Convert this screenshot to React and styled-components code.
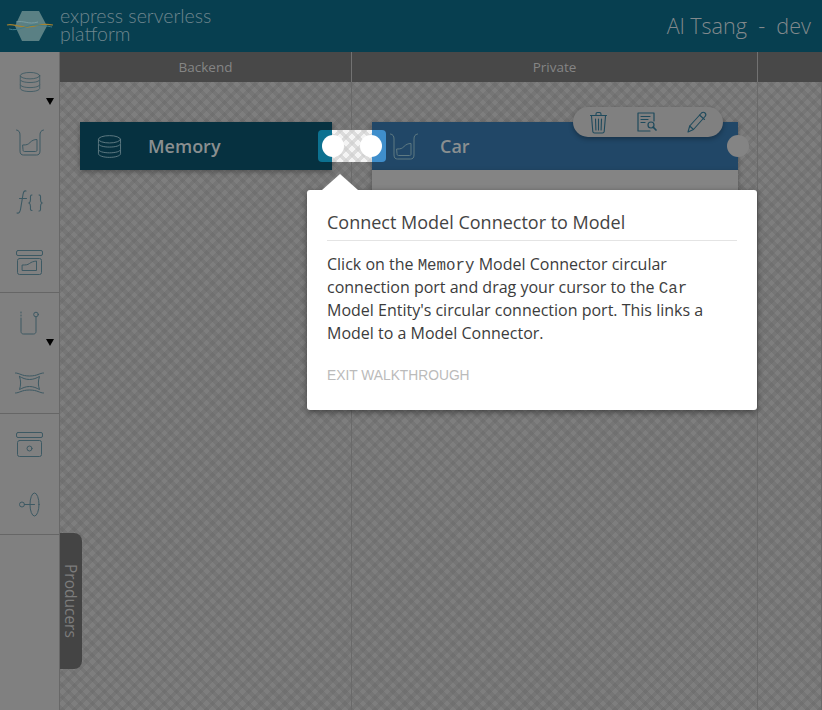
import React from 'react';
import styled, { createGlobalStyle } from 'styled-components';

const Global = createGlobalStyle`
  html, body { margin: 0; padding: 0; height: 100%; background: #808080; }
  #root { height: 100%; }
  * { box-sizing: border-box; }
`;

const pattern = (a, b) => `
  background-color: ${a};
  background-image:
    repeating-linear-gradient(45deg, ${b} 0 4px, transparent 4px 8.5px),
    repeating-linear-gradient(-45deg, ${b} 0 4px, transparent 4px 8.5px);
`;

const Page = styled.div`
  width: 822px; height: 710px; overflow: hidden; position: relative;
  display: flex; flex-direction: column;
  font-family: "Open Sans", sans-serif;
`;
const Header = styled.header`
  height: 52px; flex: none; background: #073f50;
  display: flex; align-items: center; justify-content: space-between;
  padding: 0 11px 0 6px;
`;
const Brand = styled.div`display: flex; align-items: center; gap: 6px;`;
const BrandText = styled.div`
  font-family: Lato, sans-serif; font-weight: 300; font-size: 19.5px; line-height: 18.500px;
  color: #6f868e; width: 170px; margin-top: -2px;
`;
const User = styled.div`
  font-size: 21.600px; font-weight: 300; color: #82898c; white-space: pre; margin-top: -1px;
`;
const Body = styled.div`flex: 1; display: flex; min-height: 0;`;
const Sidebar = styled.aside`
  width: 60px; flex: none; background: #808080; border-right: 1px solid #686868;
`;
const Section = styled.div`
  border-bottom: 1px solid #666;
  &:first-child { height: 241px; }
  height: 121px;
`;
const Tool = styled.div`
  height: 60px; position: relative; display: flex; align-items: center; justify-content: center;
  color: #3d5963;
`;
const Caret = styled.span`
  position: absolute; left: 46px; top: 46px; width: 0; height: 0;
  border-left: 4px solid transparent; border-right: 4px solid transparent;
  border-top: 7px solid #000;
`;
const Main = styled.main`flex: 1; display: flex; flex-direction: column; position: relative; min-width: 0;`;
const ColumnHeads = styled.div`
  height: 30px; flex: none; display: grid; grid-template-columns: 292px 406px 1fr; background: #484848;
`;
const ColumnHead = styled.div`
  display: flex; align-items: center; justify-content: center;
  font-size: 13.5px; color: #858585; border-right: 1px solid #727272;
  &:last-child { border-right: 0; }
`;
const Stage = styled.div`
  flex: 1; position: relative;
  display: grid; grid-template-columns: 292px 406px 1fr;
  ${pattern('#7e7e7e', 'rgba(100,100,100,.32)')}
`;
const Lane = styled.div`
  border-right: 1px solid #6a6a6a;
  &:last-child { border-right: 0; }
`;
const Node = styled.div`
  position: absolute; top: 40px; height: 48px; left: ${p => p.$left}px; width: ${p => p.$width}px;
  background: ${p => p.$bg}; box-shadow: 0 2px 5px rgba(0,0,0,.3);
  display: flex; align-items: center; color: #8a8f90;
  font-size: 18px; font-weight: 600;
`;
const NodeIcon = styled.span`
  display: flex; width: 58px; padding-left: ${p => p.$pad}px; color: #5f7a82;
`;
const NodeLabel = styled.span`margin-left: ${p => p.$m}px;`;
const CarBody = styled.div`
  position: absolute; left: 312px; top: 88px; width: 366px; height: 24px; background: #848484;
  box-shadow: 0 2px 5px rgba(0,0,0,.3);
`;
const Spot = styled.div`
  position: absolute; left: 272px; top: 48px; width: 40px; height: 32px;
  ${pattern('#f4f4f4', 'rgba(205,205,205,.62)')}
`;
const Tab = styled.div`
  position: absolute; top: ${p => p.$top}px; left: ${p => p.$left}px; width: 14px; height: 32px;
  background: ${p => p.$bg};
  border-radius: ${p => (p.$right ? '0 4px 4px 0' : '4px 0 0 4px')};
`;
const Port = styled.div`
  position: absolute; top: 53px; left: ${p => p.$left}px; width: 22px; height: 22px; border-radius: 50%;
  background: ${p => p.$bg || '#fff'};
`;
const ActionPill = styled.div`
  position: absolute; left: 513px; top: 25px; width: 150px; height: 30px; border-radius: 15px;
  background: #808080; box-shadow: 0 2px 5px rgba(0,0,0,.3);
  display: flex; align-items: center; gap: 30px; padding-left: 17px; color: #1f4a5c;
`;
const Popover = styled.div`
  position: absolute; left: 247px; top: 108px; width: 450px; height: 220px; background: #fff;
  border-radius: 3px; box-shadow: 0 2px 6px rgba(0,0,0,.45);
  padding: 20px 20px 0;
  &::before {
    content: ""; position: absolute; left: 15px; top: -16px; width: 0; height: 0;
    border-left: 18px solid transparent; border-right: 18px solid transparent; border-bottom: 16px solid #fff;
  }
`;
const PopTitle = styled.div`
  font-size: 18px; line-height: 24px; color: #444; padding-bottom: 6px; border-bottom: 1px solid #e4e4e4;
  font-weight: 400;
`;
const PopText = styled.p`
  margin: 12px 0 0; font-size: 16px; line-height: 23px; color: #3c3c3c; width: 400px;
`;
const Code = styled.code`
  font-family: "Liberation Mono", monospace; font-size: 15.800px; line-height: 1; color: #444;
`;
const Exit = styled.div`
  margin-top: 22px; font-size: 13.800px; line-height: 18px; color: #bbb;
  font-family: "Liberation Sans", sans-serif;
`;
const Producers = styled.div`
  position: absolute; left: 0; top: 451px; width: 22px; height: 136px; background: #444;
  border-radius: 0 8px 8px 0; writing-mode: vertical-rl;
  display: flex; align-items: center; justify-content: center;
  font-size: 15.500px; color: #7c7c7c;
`;

const Ic = ({ w = 26, h = 26, vb = '0 0 26 26', children, sw = 1 }) => (
  <svg width={w} height={h} viewBox={vb} fill="none" stroke="currentColor" strokeWidth={sw} strokeLinecap="round" strokeLinejoin="round">{children}</svg>
);
const Db = ({ w = 22, h = 24 }) => (
  <Ic w={w} h={h}>
    <ellipse cx="13" cy="5.500" rx="11.500" ry="3.800" />
    <path d="M1.500 6v4c0 2 5 3.600 11.500 3.600S24.500 12 24.500 10V6" />
    <path d="M1.500 11v5c0 2 5 3.600 11.500 3.600S24.500 18 24.500 16v-5" />
    <path d="M1.500 16.500v4c0 2 5 3.800 11.500 3.800s11.500-1.800 11.500-3.800v-4" />
  </Ic>
);
const Beaker = () => (
  <Ic w={28} h={27} vb="0 0 28 27">
    <path d="M.5 1C3 1.500 4 3 4 6v16c0 3 1.500 4 3.500 4h13c2 0 3.500-1 3.500-4V6c0-3 1-4.500 3.500-5" />
    <path d="M7 16c4 0 5-.5 7-2.500s4-3 7-3V21c0 1-.5 1.500-1.500 1.500h-11C7.500 22.500 7 22 7 21z" />
  </Ic>
);
const Func = () => (
  <svg width="28" height="24" viewBox="0 0 28 24" fill="none" stroke="currentColor" strokeWidth="1.100" strokeLinecap="round">
    <path d="M10 1C8 .5 7.500 2 7 4.500L4.500 19.500C4 22 3 23.500 1 23" />
    <path d="M3.500 8.500h7" />
    <path d="M16 5c-2-.2-1.500 2-1.500 4.500s-.5 3-1.500 3.500c1 .5 1.500 1 1.500 3.500S14 20.500 16 20.500" />
    <path d="M23 5c2-.2 1.500 2 1.500 4.500s.5 3 1.500 3.500c-1 .5-1.500 1-1.500 3.500s.5 4.500-1.500 4.500" />
  </svg>
);
const BoxChart = () => (
  <Ic w={27} h={25} vb="0 0 27 25">
    <rect x=".5" y=".5" width="26" height="5" rx="1.500" />
    <rect x="1.500" y="8.500" width="24" height="16" rx="2" />
    <path d="M6.500 15c3 0 5 0 7-1.500s3.500-2 7-2.500V20.500h-14z" />
  </Ic>
);
const Connector = () => (
  <Ic w={20} h={24} vb="0 0 20 24">
    <path d="M1 1v1M1 4v1M1 7v13.500C1 22 2 23 3.500 23h10c1.500 0 2.500-1 2.500-2.500V6" />
    <circle cx="16" cy="3.500" r="2.300" />
  </Ic>
);
const Bridge = () => (
  <Ic w={29} h={22} vb="0 0 29 22">
    <path d="M.5 1c4 0 6 3 14 3s10-3 14-3" />
    <path d="M.5 21c4 0 6-3 14-3s10 3 14 3" />
    <path d="M4.500 4.500c3 1.500 6 3 10 3s7-1.500 10-3c-1.500 4-1.500 9 0 13-3-1.500-6-3-10-3s-7 1.500-10 3c1.500-4 1.500-9 0-13z" />
  </Ic>
);
const BoxPort = () => (
  <Ic w={27} h={25} vb="0 0 27 25">
    <rect x=".5" y=".5" width="26" height="5" rx="1.500" />
    <rect x="1.500" y="8.500" width="24" height="16" rx="2" />
    <circle cx="13.500" cy="16.500" r="2.500" />
  </Ic>
);
const Endpoint = () => (
  <Ic w={21} h={25} vb="0 0 21 25">
    <circle cx="3" cy="12.500" r="2.500" />
    <path d="M5.500 12.500h10" />
    <ellipse cx="15.500" cy="12.500" rx="4.500" ry="11.500" />
  </Ic>
);
const Logo = () => (
  <svg width="48" height="32" viewBox="0 0 48 32" fill="none">
    <polygon points="16,1 33,1 41,16 33,31 16,31 9,16" fill="#5a8084" />
    <path d="M1 15c6-2 12 3 22 2s12-4 24-2" stroke="#a5822f" strokeWidth="1.200" />
    <path d="M3 19c10 3 18-5 28-4s10 1 15 2" stroke="#3f7d8b" strokeWidth="1" />
    <path d="M10 12c8-2 12 3 22 0" stroke="#7fa3a8" strokeWidth=".8" />
  </svg>
);
const Trash = () => (
  <svg width="17" height="23" viewBox="0 0 17 23" fill="none" stroke="currentColor" strokeWidth="1.100" strokeLinecap="round" strokeLinejoin="round">
    <path d="M.5 4.500h16M6 4.500V3c0-1 .8-1.500 1.500-1.500h2c.7 0 1.500.5 1.500 1.500v1.500" />
    <path d="M1.500 5l1.300 15.500c.1 1 .7 1.500 1.700 1.500h8c1 0 1.600-.5 1.700-1.500L15.500 5" />
    <path d="M5.500 8l.4 11M8.500 8v11M11.500 8l-.4 11" />
  </svg>
);
const Doc = () => (
  <svg width="20" height="20" viewBox="0 0 20 20" fill="none" stroke="currentColor" strokeWidth="1.200" strokeLinecap="round" strokeLinejoin="round">
    <path d="M17 9V1H1v18h12" />
    <path d="M4 4.500h9M4 7.500h7M4 10.500h4" />
    <circle cx="14" cy="13" r="3" />
    <path d="M16.200 15.200L19 18" strokeWidth="1.700" />
  </svg>
);
const Pencil = () => (
  <svg width="21" height="22" viewBox="0 0 21 22" fill="none" stroke="currentColor" strokeWidth="1.100" strokeLinecap="round" strokeLinejoin="round">
    <path d="M1 21l1.700-6L14.500 2c1-1 2.500-1 3.500 0s1 2.500 0 3.500L6.500 18.500z" />
    <path d="M12.500 4l5 4.500M2.700 15l3.800 3.500" />
  </svg>
);

const App = () => (
  <Page>
    <Global />
    <Header>
      <Brand>
        <Logo />
        <BrandText>express serverless platform</BrandText>
      </Brand>
      <User>{'Al Tsang  -  dev'}</User>
    </Header>
    <Body>
      <Sidebar>
        <Section>
          <Tool><Db /><Caret /></Tool>
          <Tool><Beaker /></Tool>
          <Tool><Func /></Tool>
          <Tool><BoxChart /></Tool>
        </Section>
        <Section>
          <Tool><Connector /><Caret /></Tool>
          <Tool><Bridge /></Tool>
        </Section>
        <Section>
          <Tool><BoxPort /></Tool>
          <Tool><Endpoint /></Tool>
        </Section>
      </Sidebar>
      <Main>
        <ColumnHeads>
          <ColumnHead>Backend</ColumnHead>
          <ColumnHead>Private</ColumnHead>
          <ColumnHead />
        </ColumnHeads>
        <Stage>
          <Lane /><Lane /><Lane />
          <Node $left={20} $width={252} $bg="#063140">
            <NodeIcon $pad={17}><Db w={25} h={27} /></NodeIcon>
            <NodeLabel $m={10}>Memory</NodeLabel>
          </Node>
          <Node $left={312} $width={366} $bg="#214767">
            <NodeIcon $pad={18}><Beaker /></NodeIcon>
            <NodeLabel $m={10}>Car</NodeLabel>
          </Node>
          <CarBody />
          <Spot />
          <Tab $left={258} $top={48} $bg="#0c7190" />
          <Tab $left={312} $top={48} $bg="#3f8ecb" $right />
          <Port $left={262} />
          <Port $left={300} />
          <Port $left={667} $bg="#848484" />
          <ActionPill>
            <Trash /><Doc /><Pencil />
          </ActionPill>
          <Popover>
            <PopTitle>Connect Model Connector to Model</PopTitle>
            <PopText>
              Click on the <Code>Memory</Code> Model Connector circular connection port and drag your cursor to the <Code>Car</Code> Model Entity's circular connection port. This links a Model to a Model Connector.
            </PopText>
            <Exit>EXIT WALKTHROUGH</Exit>
          </Popover>
          <Producers>Producers</Producers>
        </Stage>
      </Main>
    </Body>
  </Page>
);

export default App;
